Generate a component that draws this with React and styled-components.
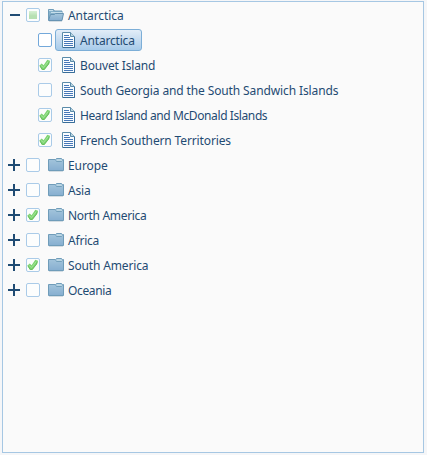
import React from 'react';
import styled, { createGlobalStyle, css } from 'styled-components';

const GlobalStyle = createGlobalStyle`
  * { box-sizing: border-box; }
  body { margin: 0; background: #f5f6f8; }
`;

const Page = styled.main`
  width: 427px;
  height: 455px;
  padding: 1px 3px 2px 2px;
`;

const Panel = styled.ul`
  height: 452px;
  margin: 0;
  padding: 1px 0 0 5px;
  list-style: none;
  border: 1px solid #a6c7e3;
  background: #fafafa;
  font: 12px/18px 'Noto Sans', sans-serif;
  color: #1f4b73;
`;

const Row = styled.li`
  display: flex;
  align-items: center;
  height: 25px;
  padding-bottom: 1px;
  padding-left: ${(p) => (p.$child ? 30 : 0)}px;
`;

const Toggle = styled.svg`
  display: block;
  flex: none;
  width: 12px;
  height: 12px;
  margin-right: 6px;
`;

const Checkbox = styled.span`
  display: flex;
  align-items: center;
  justify-content: center;
  flex: none;
  width: 14px;
  height: 14px;
  border: 1px solid ${(p) => (p.$hot ? '#73a8da' : '#aacbe8')};
  border-radius: 2px;
  background: ${(p) => (p.$hot ? '#fff' : '#fcfdfd')};
`;

const Partial = styled.span`
  width: 8px;
  height: 8px;
  background: linear-gradient(#d8f1d5, #b7e0b2 60%);
`;

const Label = styled.span`
  display: flex;
  align-items: center;
  height: 22px;
  margin-left: ${(p) => (p.$child ? 3 : 2)}px;
  padding: 0 ${(p) => (p.$child ? 6 : 5)}px;
  border: 1px solid transparent;
  border-radius: 3px;
  white-space: nowrap;
  ${(p) => p.$selected && css`
    border-color: #7caed7;
    background: linear-gradient(#e2edf8, #c7dcf0 48%, #a7cbea);
  `}
`;

const Caption = styled.span`
  margin-left: ${(p) => (p.$child ? 5 : 4)}px;
  padding-top: 2px;
  letter-spacing: ${(p) => p.$spacing || 0}px;
`;

const Icon = styled.svg`
  display: block;
  flex: none;
`;

function Tick() {
  return (
    <Icon width="12" height="12" viewBox="0 0 12 12">
      <path d="M.5 6.5 2.7 4.5 4.6 6.2 8.3 .8 11 1.8 10 5 5.3 10.9 2.8 10.7Z" fill="#7fd573" />
      <path d="M2 6.5 4.5 8.5 9.3 2.5" fill="none" stroke="#a2e39a" strokeWidth="1" />
      <path d="M.8 6.7 3 10.3 5.2 10.5 9.6 5 10.3 2.5" fill="none" stroke="#5fb957" strokeWidth=".8" />
    </Icon>
  );
}

function Folder({ open }) {
  return (
    <Icon width="16" height="14" viewBox="0 0 16 14">
      <defs>
        <linearGradient id={open ? 'openFolder' : 'closedFolder'} x2="0" y2="1">
          <stop stopColor="#a5c6dc" />
          <stop offset="1" stopColor="#86aed0" />
        </linearGradient>
      </defs>
      {open ? (
        <>
          <path d="M.5 12V1.5h5l1 1.5h7.5V10" fill="#86b1ca" stroke="#6f9cb9" />
          <path d="M1 2.5h4M3 4.5h11" stroke="#c7dfeb" />
          <path d="M2.5 6.5h4l1-1h8l-1.5 7H.5Z" fill="url(#openFolder)" stroke="#6793b2" />
          <path d="M1 13.5h13" stroke="#d4dde3" />
        </>
      ) : (
        <>
          <path d="M.5 12.5v-11h7l1-1h5l1 1h1v11Z" fill="url(#closedFolder)" stroke="#6f9cb9" />
          <path d="M7.5 2.5l1 1h5l1-1" fill="none" stroke="#739fba" />
          <path d="M9 1.5h4M9 2.5h5" stroke="#b9d5e3" />
          <path d="M1 13.5h14" stroke="#d4dde3" />
        </>
      )}
    </Icon>
  );
}

function Document() {
  return (
    <Icon width="13" height="16" viewBox="0 0 13 16">
      <path d="M.5 15.5V.5h8l4 4v11Z" fill="#fafdff" stroke="#5a8ba9" />
      <path d="M8.5.5v4h4" fill="#b9d4df" stroke="#5a8ba9" />
      <path d="M2 3.5h5M2 5.5h6M2 7.5h9M2 9.5h9M2 11.5h9M2 13.5h9" stroke="#4778b8" />
      <path d="M12.5 5v10.5H1" fill="none" stroke="#386d99" />
    </Icon>
  );
}

const nodes = [
  { name: 'Antarctica', state: 'partial', open: true, spacing: -0.1 },
  { name: 'Antarctica', child: true, selected: true, spacing: -0.18 },
  { name: 'Bouvet Island', child: true, state: 'checked', spacing: -0.15 },
  { name: 'South Georgia and the South Sandwich Islands', child: true, spacing: -0.12 },
  { name: 'Heard Island and McDonald Islands', child: true, state: 'checked', spacing: -0.4 },
  { name: 'French Southern Territories', child: true, state: 'checked', spacing: -0.13 },
  { name: 'Europe', spacing: -0.1 },
  { name: 'Asia', spacing: -0.2 },
  { name: 'North America', state: 'checked', spacing: -0.3 },
  { name: 'Africa', spacing: -0.2 },
  { name: 'South America', state: 'checked', spacing: -0.15 },
  { name: 'Oceania', spacing: -0.35 },
];

function TreeNode({ name, child, state, selected, open, spacing }) {
  return (
    <Row $child={child}>
      {!child && (
        <Toggle viewBox="0 0 12 12">
          <path d={open ? 'M2 6h10' : 'M0 6h12M6 0v12'} stroke="#1f4b73" strokeWidth="2" shapeRendering="crispEdges" />
        </Toggle>
      )}
      <Checkbox $hot={selected}>
        {state === 'checked' && <Tick />}
        {state === 'partial' && <Partial />}
      </Checkbox>
      <Label $child={child} $selected={selected}>
        {child ? <Document /> : <Folder open={open} />}
        <Caption $child={child} $spacing={spacing}>{name}</Caption>
      </Label>
    </Row>
  );
}

export default function App() {
  return (
    <>
      <GlobalStyle />
      <Page>
        <Panel>
          {nodes.map((node, i) => <TreeNode key={i} {...node} />)}
        </Panel>
      </Page>
    </>
  );
}
